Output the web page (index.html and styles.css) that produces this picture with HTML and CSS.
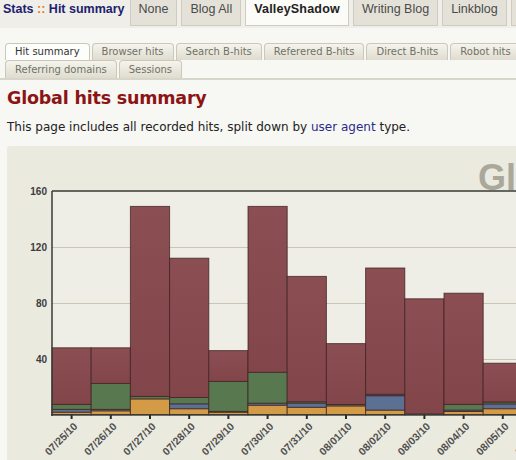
FILE: index.html
```html
<!DOCTYPE html>
<html lang="en">
<head>
<meta charset="utf-8">
<title>Stats :: Hit summary</title>
<link rel="stylesheet" href="styles.css">
</head>
<body>
<div class="topbar">
  <span class="brand">Stats <span class="sep">::</span> Hit summary</span>
  <a class="navbtn" href="#">None</a>
  <a class="navbtn" href="#">Blog All</a>
  <a class="navbtn active" href="#">ValleyShadow</a>
  <a class="navbtn" href="#">Writing Blog</a>
  <a class="navbtn" href="#">Linkblog</a>
  <a class="navbtn" href="#">VS Archive</a>
</div>
<div class="tabs">
  <div class="tabrow">
    <a class="tab active" href="#">Hit summary</a>
    <a class="tab" href="#">Browser hits</a>
    <a class="tab" href="#">Search B-hits</a>
    <a class="tab" href="#">Referered B-hits</a>
    <a class="tab" href="#">Direct B-hits</a>
    <a class="tab" href="#">Robot hits</a>
  </div>
  <div class="tabrow">
    <a class="tab" href="#">Referring domains</a>
    <a class="tab" href="#">Sessions</a>
  </div>
</div>
<main class="content">
  <h1 class="title">Global hits summary</h1>
  <p class="intro">This page includes all recorded hits, split down by <a href="#">user agent</a> type.</p>
  <div class="chart">
    <svg class="chart-svg" width="540" height="330" viewBox="0 0 540 330" xmlns="http://www.w3.org/2000/svg">
      <defs>
        <linearGradient id="mar" x1="0" y1="0" x2="0" y2="1">
          <stop offset="0" stop-color="#8b4e53"/>
          <stop offset="1" stop-color="#82464a"/>
        </linearGradient>
      </defs>
      <rect x="45" y="45" width="495" height="224" fill="#efeee6"/>
      <text class="ctitle" x="471" y="44">Global hits summary</text>
      <g stroke="#c9c6b6" stroke-width="1">
        <line x1="45" y1="101.5" x2="540" y2="101.5"/>
        <line x1="45" y1="157.5" x2="540" y2="157.5"/>
        <line x1="45" y1="213.5" x2="540" y2="213.5"/>
      </g>
      <g class="ylab">
        <text x="40" y="48.5">160</text>
        <text x="40" y="104.5">120</text>
        <text x="40" y="160.5">80</text>
        <text x="40" y="216.5">40</text>
      </g>
      <g stroke="#3c2222" stroke-opacity="0.75" stroke-width="1">
        <!-- bar 1 -->
        <rect x="45" y="266.2" width="39.2" height="2.8" fill="#d39b45"/>
        <rect x="45" y="263.4" width="39.2" height="2.8" fill="#5b7092"/>
        <rect x="45" y="258.4" width="39.2" height="5" fill="#587850"/>
        <rect x="45" y="201.8" width="39.2" height="56.6" fill="url(#mar)"/>
        <!-- bar 2 -->
        <rect x="84.2" y="264.8" width="39.2" height="4.2" fill="#d39b45"/>
        <rect x="84.2" y="263.4" width="39.2" height="1.4" fill="#5b7092"/>
        <rect x="84.2" y="237.4" width="39.2" height="26" fill="#587850"/>
        <rect x="84.2" y="201.8" width="39.2" height="35.6" fill="url(#mar)"/>
        <!-- bar 3 -->
        <rect x="123.4" y="252.9" width="39.2" height="16.1" fill="#d39b45"/>
        <rect x="123.4" y="250.4" width="39.2" height="2.5" fill="#587850"/>
        <rect x="123.4" y="60.4" width="39.2" height="190" fill="url(#mar)"/>
        <!-- bar 4 -->
        <rect x="162.6" y="262.7" width="39.2" height="6.3" fill="#d39b45"/>
        <rect x="162.6" y="257.8" width="39.2" height="4.9" fill="#5b7092"/>
        <rect x="162.6" y="251.5" width="39.2" height="6.3" fill="#587850"/>
        <rect x="162.6" y="112.2" width="39.2" height="139.3" fill="url(#mar)"/>
        <!-- bar 5 -->
        <rect x="201.8" y="266.2" width="39.2" height="2.8" fill="#d39b45"/>
        <rect x="201.8" y="265.4" width="39.2" height="0.8" fill="#5b7092"/>
        <rect x="201.8" y="235.4" width="39.2" height="30" fill="#587850"/>
        <rect x="201.8" y="204.6" width="39.2" height="30.8" fill="url(#mar)"/>
        <!-- bar 6 -->
        <rect x="241" y="259.2" width="39.2" height="9.8" fill="#d39b45"/>
        <rect x="241" y="257.2" width="39.2" height="2" fill="#5b7092"/>
        <rect x="241" y="226.3" width="39.2" height="30.9" fill="#587850"/>
        <rect x="241" y="60.4" width="39.2" height="165.9" fill="url(#mar)"/>
        <!-- bar 7 -->
        <rect x="280.2" y="261.3" width="39.2" height="7.7" fill="#d39b45"/>
        <rect x="280.2" y="257.1" width="39.2" height="4.2" fill="#5b7092"/>
        <rect x="280.2" y="255.7" width="39.2" height="1.4" fill="#587850"/>
        <rect x="280.2" y="130.4" width="39.2" height="125.3" fill="url(#mar)"/>
        <!-- bar 8 -->
        <rect x="319.4" y="259.9" width="39.2" height="9.1" fill="#d39b45"/>
        <rect x="319.4" y="258.5" width="39.2" height="1.4" fill="#587850"/>
        <rect x="319.4" y="197.6" width="39.2" height="60.9" fill="url(#mar)"/>
        <!-- bar 9 -->
        <rect x="358.6" y="264.1" width="39.2" height="4.9" fill="#d39b45"/>
        <rect x="358.6" y="249.7" width="39.2" height="14.4" fill="#5b7092"/>
        <rect x="358.6" y="248.3" width="39.2" height="1.4" fill="#3f4f6a"/>
        <rect x="358.6" y="122" width="39.2" height="126.3" fill="url(#mar)"/>
        <!-- bar 10 -->
        <rect x="397.8" y="267.9" width="39.2" height="1.1" fill="#d39b45"/>
        <rect x="397.8" y="152.8" width="39.2" height="115.1" fill="url(#mar)"/>
        <!-- bar 11 -->
        <rect x="437" y="265.5" width="39.2" height="3.5" fill="#d39b45"/>
        <rect x="437" y="264.1" width="39.2" height="1.4" fill="#5b7092"/>
        <rect x="437" y="258.4" width="39.2" height="5.7" fill="#587850"/>
        <rect x="437" y="147.2" width="39.2" height="111.2" fill="url(#mar)"/>
        <!-- bar 12 -->
        <rect x="476.2" y="262.7" width="39.2" height="6.3" fill="#d39b45"/>
        <rect x="476.2" y="257.9" width="39.2" height="4.8" fill="#5b7092"/>
        <rect x="476.2" y="256" width="39.2" height="1.9" fill="#587850"/>
        <rect x="476.2" y="217.2" width="39.2" height="38.8" fill="url(#mar)"/>
        <!-- bar 13 -->
        <rect x="515.4" y="263" width="39.2" height="6" fill="#d39b45"/>
        <rect x="515.4" y="190" width="39.2" height="73" fill="url(#mar)"/>
      </g>
      <g stroke="#3a3a36">
        <line x1="45" y1="45" x2="540" y2="45" stroke-width="1.5"/>
        <line x1="45" y1="45" x2="45" y2="270" stroke-width="1.5"/>
        <line x1="44" y1="268.8" x2="540" y2="268.8" stroke-width="1.6"/>
      </g>
      <g stroke="#2a2a2a" stroke-width="2">
        <line x1="64.6" y1="269" x2="64.6" y2="273"/>
        <line x1="103.8" y1="269" x2="103.8" y2="273"/>
        <line x1="143" y1="269" x2="143" y2="273"/>
        <line x1="182.2" y1="269" x2="182.2" y2="273"/>
        <line x1="221.4" y1="269" x2="221.4" y2="273"/>
        <line x1="260.6" y1="269" x2="260.6" y2="273"/>
        <line x1="299.8" y1="269" x2="299.8" y2="273"/>
        <line x1="339" y1="269" x2="339" y2="273"/>
        <line x1="378.2" y1="269" x2="378.2" y2="273"/>
        <line x1="417.4" y1="269" x2="417.4" y2="273"/>
        <line x1="456.6" y1="269" x2="456.6" y2="273"/>
        <line x1="495.8" y1="269" x2="495.8" y2="273"/>
        <line x1="535" y1="269" x2="535" y2="273"/>
      </g>
      <g class="xlab">
        <text transform="translate(71.1 281) rotate(-45)">07/25/10</text>
        <text transform="translate(110.3 281) rotate(-45)">07/26/10</text>
        <text transform="translate(149.5 281) rotate(-45)">07/27/10</text>
        <text transform="translate(188.7 281) rotate(-45)">07/28/10</text>
        <text transform="translate(227.9 281) rotate(-45)">07/29/10</text>
        <text transform="translate(267.1 281) rotate(-45)">07/30/10</text>
        <text transform="translate(306.3 281) rotate(-45)">07/31/10</text>
        <text transform="translate(345.5 281) rotate(-45)">08/01/10</text>
        <text transform="translate(384.7 281) rotate(-45)">08/02/10</text>
        <text transform="translate(423.9 281) rotate(-45)">08/03/10</text>
        <text transform="translate(463.1 281) rotate(-45)">08/04/10</text>
        <text transform="translate(502.3 281) rotate(-45)">08/05/10</text>
        <text transform="translate(541.5 281) rotate(-45)">08/06/10</text>
      </g>
    </svg>
  </div>
</main>
</body>
</html>
```

FILE: styles.css
```css
html, body {
  margin: 0;
  padding: 0;
  width: 516px;
  height: 460px;
  overflow: hidden;
  background: #f7f7f3;
}

.topbar {
  display: flex;
  align-items: flex-start;
  gap: 4px;
  height: 28px;
  padding-left: 3px;
  background: #efeee9;
  white-space: nowrap;
  overflow: hidden;
  font-family: "Liberation Sans", Arial, sans-serif;
  font-size: 12.5px;
  line-height: 15px;
}

.brand {
  flex: none;
  padding-top: 2px;
  margin-right: 1px;
  font-weight: bold;
  color: #20206e;
}

.sep {
  color: #e07a2c;
}

.navbtn {
  flex: none;
  height: 23px;
  padding: 2px 8px 0;
  background: #e4e2d8;
  border: 1px solid #cfccbf;
  border-top: none;
  color: #4a4a4a;
  text-decoration: none;
}

.navbtn.active {
  background: #fbfbf8;
  font-weight: bold;
  color: #222;
  letter-spacing: 0.2px;
}

.tabs {
  margin-top: 15px;
  padding-left: 5px;
  border-bottom: 2px solid #d8d5c9;
  font-family: "DejaVu Sans", Verdana, sans-serif;
  font-size: 10px;
}

.tabrow {
  display: flex;
  gap: 2px;
}

.tab {
  flex: none;
  height: 16px;
  line-height: 16px;
  padding: 0 9px;
  border: 1px solid #cbc8b9;
  border-bottom: none;
  border-radius: 4px 4px 0 0;
  background: linear-gradient(#f5f4ed, #dfdccf);
  color: #717166;
  text-decoration: none;
}

.tabrow + .tabrow .tab {
  height: 17px;
  line-height: 17px;
}

.tab.active {
  background: #fdfdfb;
  color: #333;
}

.content {
  display: flex;
  flex-direction: column;
  align-items: flex-start;
}

.title {
  margin: 8px 0 0 7px;
  font-family: "DejaVu Sans", Verdana, sans-serif;
  font-size: 17.5px;
  line-height: 21px;
  font-weight: bold;
  letter-spacing: -0.2px;
  color: #8c1414;
}

.intro {
  margin: 11px 0 0 7px;
  font-family: "DejaVu Sans", Verdana, sans-serif;
  font-size: 12px;
  line-height: 15px;
  color: #222;
}

.intro a {
  color: #2b2b8c;
  text-decoration: none;
}

.chart {
  margin: 11px 0 0 7px;
  width: 540px;
  height: 330px;
  background: #ebeadf;
  border-radius: 3px;
}

.chart-svg {
  display: block;
}

.ctitle {
  font-family: "Liberation Sans", Arial, sans-serif;
  font-weight: bold;
  font-size: 36px;
  fill: #aaa79b;
}

.ylab text {
  font-family: "Liberation Sans", Arial, sans-serif;
  font-weight: bold;
  font-size: 10px;
  fill: #3c3c3c;
  text-anchor: end;
}

.xlab text {
  font-family: "Liberation Sans", Arial, sans-serif;
  font-weight: bold;
  font-size: 10.5px;
  fill: #505050;
  text-anchor: end;
}
```
